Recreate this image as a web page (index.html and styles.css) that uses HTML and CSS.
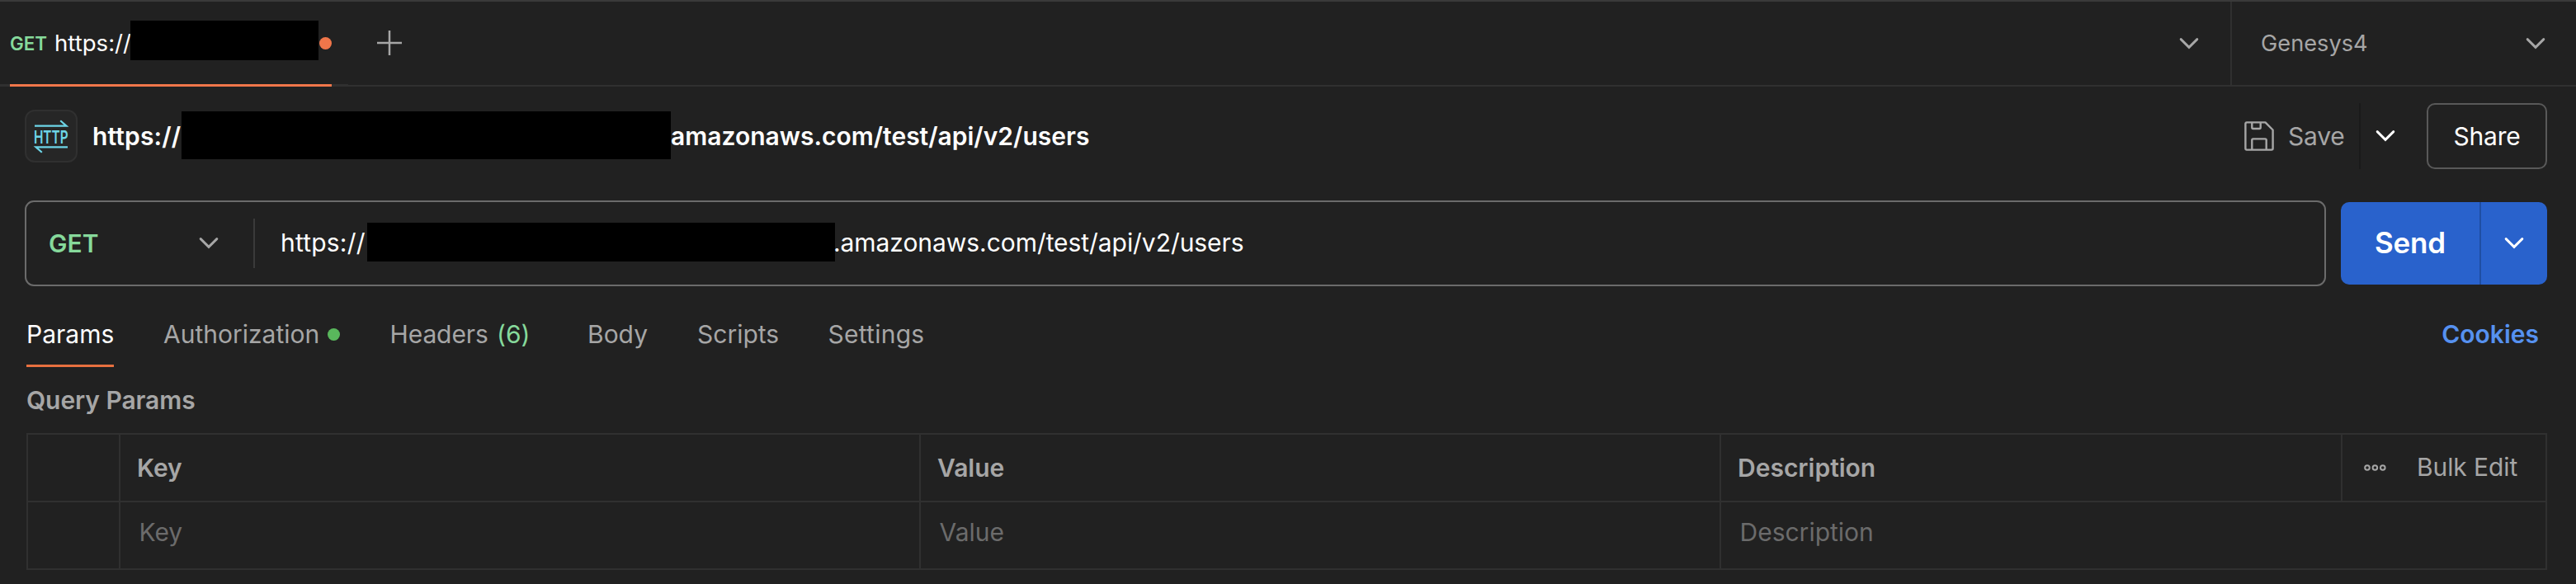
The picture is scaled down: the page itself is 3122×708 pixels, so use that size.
FILE: index.html
```html
<!DOCTYPE html>
<html lang="en">
<head>
<meta charset="utf-8">
<title>Request</title>
<link rel="stylesheet" href="styles.css">
</head>
<body>
<svg width="0" height="0" class="defs"><defs>
<symbol id="chevron" viewBox="0 0 24 16"><path d="M2.2 2.6 12 12.4 21.8 2.6" fill="none" stroke="currentColor" stroke-width="2.9" stroke-linecap="round"/></symbol>
</defs></svg>
<header class="topbar">
  <div class="tab-edge"></div>
  <div class="tab">
    <span class="tab-method">GET</span>
    <span class="tab-name">https://</span>
    <span class="redact redact-tab"></span>
    <span class="dot dot-orange"></span>
  </div>
  <div class="tab-gap"></div>
  <div class="tab-tools">
    <svg class="plus" viewBox="0 0 30 30"><path d="M0 15H30M15 0V30" stroke="#a6a6a6" stroke-width="2.5"/></svg>
    <svg class="chevron"><use href="#chevron"/></svg>
  </div>
  <div class="environment">
    <span>Genesys4</span>
    <svg class="chevron"><use href="#chevron"/></svg>
  </div>
</header>
<main>
  <section class="title-row">
    <svg class="http" viewBox="0 0 64 64">
      <rect x="1" y="1" width="62" height="62" rx="11" fill="#262626" stroke="#303030" stroke-width="2"/>
      <g fill="none" stroke="#6dd5e7" stroke-width="2.2"><path d="M12 19.7H50.5L43.2 13.2"/><path d="M52 45.3H13.5L20.8 51.8"/></g>
      <text transform="translate(10.9 40.5) scale(.7 1)" class="http-text">HTTP</text>
    </svg>
    <h1>https://</h1>
    <span class="redact redact-title"></span>
    <h1 class="title-end">amazonaws.com/test/api/v2/users</h1>
    <div class="save">
      <svg class="floppy" viewBox="0 0 36 36"><g fill="none" stroke="#a6a6a6" stroke-width="2.4" stroke-linejoin="round"><path d="M3 1.4H25.5L34.6 10.5V33Q34.6 34.6 33 34.6H3Q1.4 34.6 1.4 33V3Q1.4 1.4 3 1.4Z"/><path d="M9.3 1.4V7.6Q9.3 9 10.7 9H18.3Q19.7 9 19.7 7.6V1.4M9.3 34.6V22.8Q9.3 21.4 10.7 21.4H25.3Q26.7 21.4 26.7 22.8V34.6"/></g></svg>
      <span>Save</span>
    </div>
    <div class="save-menu"><svg class="chevron"><use href="#chevron"/></svg></div>
    <button class="share">Share</button>
  </section>
  <section class="request-row">
    <div class="url-box">
      <div class="method"><span>GET</span><svg class="chevron"><use href="#chevron"/></svg></div>
      <div class="url">
        <span class="url-start">https://</span>
        <span class="redact redact-url"></span>
        <span class="url-end">.amazonaws.com/test/api/v2/users</span>
      </div>
    </div>
    <div class="send">
      <div class="send-label">Send</div>
      <div class="send-menu"><svg class="chevron"><use href="#chevron"/></svg></div>
    </div>
  </section>
  <nav class="sections">
    <span class="active">Params</span>
    <span class="auth">Authorization<i class="dot dot-green"></i></span>
    <span class="headers">Headers <b>(6)</b></span>
    <span class="body-tab">Body</span>
    <span class="scripts">Scripts</span>
    <span class="settings">Settings</span>
    <a class="cookies">Cookies</a>
  </nav>
  <h2>Query Params</h2>
  <section class="table">
    <div class="row head">
      <div></div><div>Key</div><div>Value</div><div>Description</div>
      <div class="bulk">
        <svg class="more" viewBox="0 0 27 8"><g fill="none" stroke="#a6a6a6" stroke-width="2"><circle cx="4" cy="4" r="2.8"/><circle cx="13.4" cy="4" r="2.8"/><circle cx="22.8" cy="4" r="2.8"/></g></svg>
        <span>Bulk Edit</span>
      </div>
    </div>
    <div class="row blank">
      <div></div><div>Key</div><div>Value</div><div class="wide">Description</div>
    </div>
  </section>
</main>
</body>
</html>
```
FILE: styles.css
```css
* { box-sizing: border-box; }
body {
  margin: 0;
  height: 708px;
  overflow: hidden;
  background: #212121;
  color: #a6a6a6;
  font: 400 30px/40px Inter, "Liberation Sans", sans-serif;
  white-space: nowrap;
}
.defs { display: block; }
svg { flex: none; display: block; }
h1, h2 { margin: 0; font-size: 30px; font-weight: 600; }
.chevron { width: 24px; height: 16px; }
.redact { background: #000; flex: none; }
.dot { width: 15px; height: 15px; border-radius: 50%; flex: none; }
.dot-orange { background: #f0764a; }
.dot-green { background: #59b75c; margin-left: 10px; }

.topbar {
  display: flex;
  height: 105px;
  border-top: 2px solid #3a3a3a;
}
.tab-edge { width: 12px; border-bottom: 3px solid #303030; }
.tab {
  display: flex;
  align-items: center;
  width: 390px;
  padding: 0 0 2px;
  border-bottom: 3px solid #f0764a;
}
.tab-method {
  width: 54px;
  color: #86d99b;
  font-size: 22.4px;
  font-weight: 600;
  padding-top: 3px;
}
.tab-name { width: 92px; color: #fff; font-size: 27.6px; padding-top: 2px; }
.redact-tab { width: 228px; height: 48px; margin: 0 1px 4px 0; }
.tab .dot { margin-top: 2px; }
.tab-gap { width: 20px; border-bottom: 3px solid #303030; }
.tab-tools {
  display: flex;
  flex: 1;
  align-items: center;
  justify-content: space-between;
  padding: 0 38px 0 35px;
  border-bottom: 2px solid #303030;
}
.plus { width: 30px; height: 30px; margin-top: -1px; }
.environment {
  display: flex;
  align-items: center;
  justify-content: space-between;
  width: 419px;
  padding: 0 37px 0 35px;
  border-left: 2px solid #303030;
  border-bottom: 2px solid #303030;
  font-size: 27.2px;
}

main { padding: 20px 35px 0 30px; }
.title-row { display: flex; align-items: center; height: 80px; color: #fff; }
.http { width: 64px; height: 64px; margin-right: 18px; overflow: visible; }
.http-text { font: 600 22px/24px Inter, sans-serif; fill: #6dd5e7; }
.title-row h1:first-of-type { width: 108px; letter-spacing: .15px; }
.redact-title { width: 593px; height: 58px; margin-top: -2px; }
.save { display: flex; align-items: center; margin-left: auto; color: #a6a6a6; }
.floppy { width: 36px; height: 36px; margin-right: 17px; }
.save span { width: 86px; letter-spacing: -.2px; }
.save-menu {
  display: flex;
  align-items: center;
  width: 82px;
  height: 80px;
  padding-left: 18px;
  border-left: 2px solid #1a1a1a;
}
.share {
  width: 146px;
  height: 80px;
  padding: 0;
  border: 2px solid #595959;
  border-radius: 10px;
  background: none;
  color: #fff;
  font: inherit;
  letter-spacing: -.2px;
}

.request-row { display: flex; align-items: center; margin-top: 38px; height: 104px; }
.url-box {
  display: flex;
  align-items: center;
  width: 2789px;
  height: 104px;
  margin-right: 18px;
  border: 2px solid #6b6b6b;
  border-radius: 11px;
}
.method {
  display: flex;
  align-items: center;
  justify-content: space-between;
  width: 277px;
  height: 60px;
  padding: 0 42px 0 27px;
  border-right: 2px solid #3a3a3a;
}
.method span { color: #86d99b; font-weight: 600; }
.url { display: flex; align-items: center; margin-left: 31px; color: #fff; }
.url span:not(.redact) { margin-top: -2px; }
.url-start { width: 105px; letter-spacing: .2px; }
.redact-url { width: 567px; height: 47px; margin-top: -3px; }
.url-end { margin-left: -2px; letter-spacing: -.06px; }
.send {
  display: flex;
  width: 250px;
  height: 100px;
  border-radius: 10px;
  background: #2962cc;
  color: #fff;
  font-size: 35px;
  font-weight: 600;
}
.send-label { width: 168px; text-align: center; line-height: 98px; letter-spacing: -.2px; }
.send-menu {
  display: flex;
  flex: 1;
  align-items: center;
  justify-content: center;
  border-left: 2px solid #1f4ea3;
}

.sections { display: flex; margin-top: 36px; padding-left: 2px; height: 62px; line-height: 44px; }
.active { width: 106px; margin-right: 60px; border-bottom: 3px solid #e8703f; color: #fff; }
.auth { display: flex; align-items: center; height: 44px; width: 274.5px; }
.headers { width: 239.5px; letter-spacing: -.1px; }
.headers b { margin-left: 2px; font-weight: 400; color: #86d99b; }
.body-tab { width: 133px; }
.scripts { width: 158.5px; }
.settings { letter-spacing: .25px; }
.cookies { margin: 0 10px 0 auto; color: #5691f0; font-weight: 600; }
h2 { padding: 20px 0 0 2px; height: 80px; letter-spacing: -.08px; }

.table { margin-left: 2px; border: 2px solid #303030; }
.row { display: grid; grid-template-columns: 110px 970px 970px 753px 1fr; height: 80px; line-height: 80px; }
.row > div { min-width: 0; border-left: 2px solid #303030; padding-left: 20px; }
.row > div:first-child { border-left: 0; }
.head { font-weight: 600; border-bottom: 2px solid #303030; height: 82px; }
.row > .bulk { display: flex; align-items: center; padding-left: 26px; font-weight: 400; }
.more { width: 27px; height: 8px; margin-right: 37px; }
.bulk span { margin-top: -2px; letter-spacing: -.1px; }
.blank { color: #6b6b6b; }
.blank > div { padding-left: 22.5px; line-height: 72px; }
.row > .wide { grid-column: 4 / 6; }
```
